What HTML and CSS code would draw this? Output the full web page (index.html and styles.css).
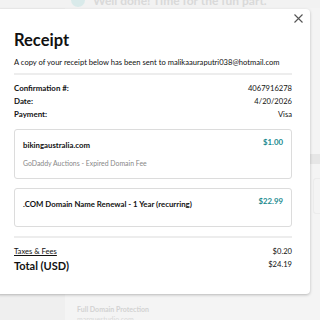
FILE: index.html
```html
<!DOCTYPE html>
<html lang="en">
<head>
    <meta charset="UTF-8">
    <meta name="viewport" content="width=device-width, initial-scale=1.0">
    <title>Receipt</title>
    <link rel="stylesheet" href="styles.css">
</head>
<body>
    <div class="page">
        <div class="banner">
            <span class="banner-icon"></span>
            <span class="banner-text">Well done! Time for the fun part.</span>
        </div>
        <div class="page-body">
            <div class="side"></div>
            <div class="main">
                <div class="strip"></div>
                <div class="ghost-card"></div>
                <div class="product">
                    <div class="product-name">Full Domain Protection</div>
                    <div class="product-domain">marquestudio.com</div>
                </div>
            </div>
        </div>
    </div>

    <div class="modal">
        <div class="modal-top">
            <button class="close" aria-label="Close">
                <svg width="9" height="9" viewBox="0 0 9 9">
                    <path d="M0.5 0.5 L8.5 8.5 M8.5 0.5 L0.5 8.5" stroke="#555" stroke-width="1.1" fill="none"/>
                </svg>
            </button>
        </div>
        <h1>Receipt</h1>
        <p class="sent">A copy of your receipt below has been sent to malikaauraputri038@hotmail.com</p>
        <div class="rule"></div>

        <div class="meta">
            <div class="meta-row"><span class="label">Confirmation #:</span><span>4067916278</span></div>
            <div class="meta-row"><span class="label">Date:</span><span>4/20/2026</span></div>
            <div class="meta-row"><span class="label">Payment:</span><span>Visa</span></div>
        </div>

        <div class="item">
            <div class="item-head">
                <span class="item-name">bikingaustralia.com</span>
                <span class="price">$1.00</span>
            </div>
            <div class="item-desc">GoDaddy Auctions - Expired Domain Fee</div>
        </div>

        <div class="item item-single">
            <div class="item-head">
                <span class="item-name">.COM Domain Name Renewal - 1 Year (recurring)</span>
                <span class="price">$22.99</span>
            </div>
        </div>

        <div class="rule rule-bottom"></div>

        <div class="totals">
            <div class="tax-row"><a href="#" class="taxes">Taxes &amp; Fees</a><span>$0.20</span></div>
            <div class="total-row"><span class="total-label">Total (USD)</span><span>$24.19</span></div>
        </div>
    </div>
</body>
</html>
```

FILE: styles.css
```css
body {
    margin: 0;
    padding: 0;
    font-family: Lato, "Noto Sans", sans-serif;
    background-color: #f2f2f2;
    color: #111;
    overflow: hidden;
}
.page {
    width: 320px;
    height: 320px;
    display: flex;
    flex-direction: column;
}
.banner {
    display: flex;
    align-items: center;
    gap: 8px;
    margin: -8px 0 0 71px;
    height: 16px;
}
.banner-icon {
    width: 14px;
    height: 14px;
    border-radius: 50%;
    background-color: #d9eaea;
}
.banner-text {
    font-size: 12px;
    color: #d9d9d9;
    font-weight: 700;
}
.page-body {
    flex: 1;
    display: flex;
}
.side {
    width: 65px;
    background-color: #efefef;
}
.main {
    flex: 1;
    display: flex;
    flex-direction: column;
    background-color: #f4f4f4;
}
.strip {
    height: 10px;
    margin-top: 146px;
    background-color: #e6e6e6;
}
.ghost-card {
    height: 34px;
    margin: 14px 0 0 248px;
    border: 1px solid #ececec;
    border-right: none;
    border-radius: 3px 0 0 3px;
}
.product {
    margin-top: auto;
    padding: 0 0 0 12px;
}
.product-name {
    font-size: 7px;
    font-weight: 700;
    color: #d2d2d2;
    line-height: 10px;
}
.product-domain {
    font-size: 7px;
    color: #d9d9d9;
    line-height: 10px;
    margin-bottom: -4px;
}

.modal {
    position: absolute;
    left: -4px;
    top: 9px;
    width: 314px;
    height: 285px;
    box-sizing: border-box;
    padding: 5px 18px 0 18px;
    background-color: #fff;
    border-radius: 4px;
    box-shadow: 0 1px 3px rgba(0, 0, 0, 0.25);
}
.modal-top {
    display: flex;
    justify-content: flex-end;
    height: 9px;
    margin-right: -11px;
}
.close {
    border: none;
    background: none;
    padding: 0;
    width: 9px;
    height: 9px;
    display: flex;
    cursor: pointer;
}
h1 {
    margin: 6px 0 0 0;
    font-size: 16.5px;
    line-height: 22px;
    font-weight: 700;
}
.sent {
    margin: 6px 0 0 0;
    font-size: 7.6px;
    line-height: 10px;
    white-space: nowrap;
}
.rule {
    height: 2px;
    background-color: #ededed;
    margin-top: 6px;
}
.meta {
    margin-top: 7px;
    font-size: 7.6px;
}
.meta-row {
    display: flex;
    justify-content: space-between;
    line-height: 13px;
}
.label {
    font-weight: 700;
    font-size: 7.9px;
}
.item {
    margin-top: 8px;
    border: 1px solid #dcdcdc;
    border-radius: 3px;
    padding: 10px 8px 9px 8px;
    height: 50px;
    box-sizing: border-box;
}
.item + .item {
    margin-top: 9px;
    height: 39px;
}
.item-head {
    display: flex;
    justify-content: space-between;
    align-items: flex-start;
    font-size: 7.8px;
    line-height: 10px;
}
.item-name {
    font-weight: 700;
}
.price {
    color: #1b8a8f;
    font-weight: 700;
    margin-top: -3px;
}
.item-desc {
    margin-top: 8px;
    font-size: 6.9px;
    line-height: 10px;
    color: #888;
}
.rule-bottom {
    margin-top: 9px;
}
.totals {
    margin-top: 8px;
    font-size: 7.6px;
}
.tax-row {
    display: flex;
    justify-content: space-between;
    line-height: 10px;
}
.taxes {
    color: #111;
    text-decoration: underline;
}
.total-row {
    display: flex;
    justify-content: space-between;
    align-items: flex-start;
    margin-top: 3px;
    line-height: 10px;
}
.total-label {
    font-size: 11px;
    line-height: 14px;
    font-weight: 700;
}
```
